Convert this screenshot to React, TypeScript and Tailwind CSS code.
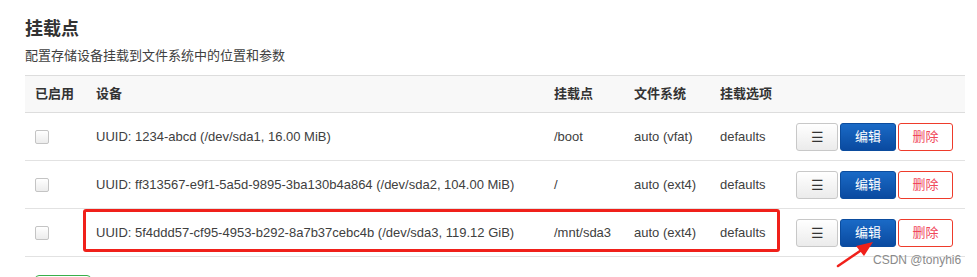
const rows = [
  { dev: 'UUID: 1234-abcd (/dev/sda1, 16.00 MiB)', mp: '/boot', fs: 'auto (vfat)', opt: 'defaults' },
  { dev: 'UUID: ff313567-e9f1-5a5d-9895-3ba130b4a864 (/dev/sda2, 104.00 MiB)', mp: '/', fs: 'auto (ext4)', opt: 'defaults' },
  { dev: 'UUID: 5f4ddd57-cf95-4953-b292-8a7b37cebc4b (/dev/sda3, 119.12 GiB)', mp: '/mnt/sda3', fs: 'auto (ext4)', opt: 'defaults' },
]

export default function App() {
  return (
    <div
      className="relative w-[977px] h-[277px] overflow-hidden bg-white text-[#404040] pl-[25px] pt-[16px]"
      style={{ fontFamily: '"Liberation Sans", Arial, "Noto Sans CJK SC", sans-serif' }}
    >
      <h2 className="text-[18px] leading-[26px] font-bold text-[#333]">挂载点</h2>
      <p className="mt-[5px] text-[13px] leading-[18px] text-[#404040]">配置存储设备挂载到文件系统中的位置和参数</p>

      <div className="relative mt-[10px] w-[940px]">
        <table className="w-[940px] border-collapse text-[13px] table-fixed">
          <colgroup>
            <col className="w-[61px]" />
            <col className="w-[458px]" />
            <col className="w-[80px]" />
            <col className="w-[86px]" />
            <col className="w-[76px]" />
            <col className="w-[179px]" />
          </colgroup>
          <thead>
            <tr className="h-[37px] bg-[#f8f8f8] border-t border-b border-[#dddddd]">
              <th className="px-[10px] text-left font-bold text-[#333]">已启用</th>
              <th className="px-[10px] text-left font-bold text-[#333]">设备</th>
              <th className="px-[10px] text-left font-bold text-[#333]">挂载点</th>
              <th className="px-[10px] text-left font-bold text-[#333]">文件系统</th>
              <th className="px-[10px] text-left font-bold text-[#333]">挂载选项</th>
              <th></th>
            </tr>
          </thead>
          <tbody>
            {rows.map((r, i) => (
              <tr key={i} className="h-[48px] border-b border-[#e2e2e2]">
                <td className="px-[10px]">
                  <div className="w-[14px] h-[14px] rounded-[2px] border border-[#c4c4c4] bg-gradient-to-b from-white to-[#ececec]" />
                </td>
                <td className="px-[10px] whitespace-nowrap">{r.dev}</td>
                <td className="px-[10px]">{r.mp}</td>
                <td className="px-[10px] whitespace-nowrap">{r.fs}</td>
                <td className="px-[10px]">{r.opt}</td>
                <td className="pl-[10px]">
                  <div className="flex gap-[2px]">
                    <button className="w-[42px] h-[28px] rounded-[3px] border border-[#c8c8c8] bg-gradient-to-b from-white to-[#ebebeb] text-[#333] text-[14px] leading-none">☰</button>
                    <button className="w-[56px] h-[28px] rounded-[3px] border border-[#0b4c9e] bg-gradient-to-b from-[#1a6ac6] to-[#0a4aa0] text-white text-[13px]">编辑</button>
                    <button className="w-[55px] h-[28px] rounded-[3px] border border-[#ee3b2b] bg-white text-[#f0485a] text-[13px]">删除</button>
                  </div>
                </td>
              </tr>
            ))}
          </tbody>
        </table>

        {/* annotation box */}
        <div className="absolute left-[58px] top-[134px] w-[697px] h-[43px] rounded-[3px] border-[3px] border-[#f0201a]" />
        <svg className="absolute left-[808px] top-[163px]" width="46" height="32" viewBox="0 0 46 32">
          <line x1="5" y1="28" x2="30" y2="11" stroke="#f0201a" strokeWidth="2.5" strokeLinecap="round" />
          <polygon points="40,4 23,8 31,18" fill="#f0201a" />
        </svg>
      </div>

      <div className="ml-[10px] mt-[18px] w-[56px] h-[30px] rounded-[4px] border border-[#3aae4a]" />

      <div className="absolute left-[873px] top-[251px] text-[12px] text-[#8a8a8a]">CSDN @tonyhi6</div>
    </div>
  )
}
